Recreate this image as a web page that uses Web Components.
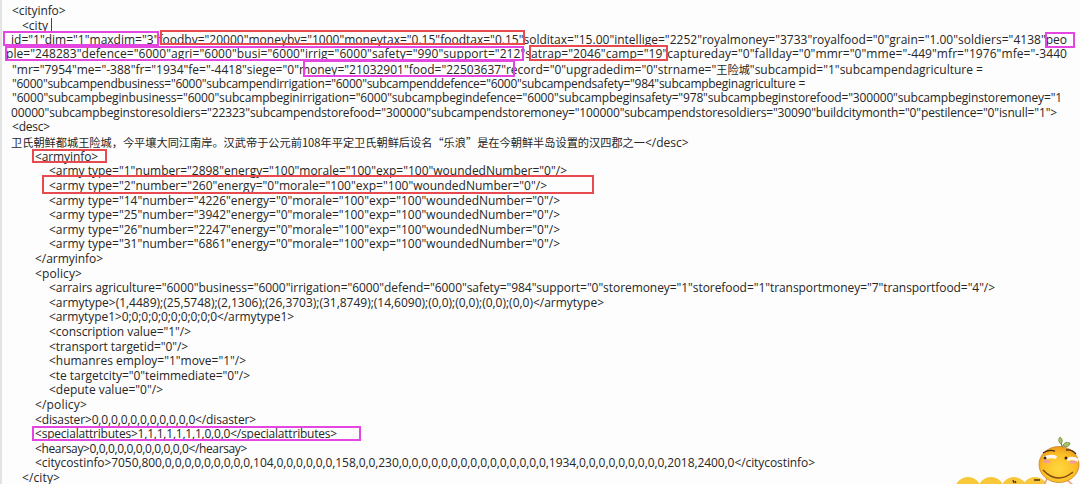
<!DOCTYPE html>
<html>
<head>
<meta charset="utf-8">
<style>
html, body { margin: 0; height: 100%; background: #fdfdfd; overflow: hidden; }
</style>
</head>
<body>
<xml-view>
<xml-line indent="12" end="65.5">&lt;cityinfo&gt;</xml-line>
<xml-line indent="22">&lt;city<text-cursor></text-cursor></xml-line>
<xml-line indent="11" end="1067">id="1"dim="1"maxdim="3"foodbv="20000"moneybv="1000"moneytax="0.15"foodtax="0.15"solditax="15.00"intellige="2252"royalmoney="3733"royalfood="0"grain="1.00"soldiers="4138"peo</xml-line>
<xml-line indent="6" end="1067">ple="248283"defence="6000"agri="6000"busi="6000"irrig="6000"safety="990"support="212"satrap="2046"camp="19"captureday="0"fallday="0"mmr="0"mme="-449"mfr="1976"mfe="-3440</xml-line>
<xml-line indent="12" end="983">"mr="7954"me="-388"fr="1934"fe="-4418"siege="0"money="21032901"food="22503637"record="0"upgradedim="0"strname="<cn-text>王险城</cn-text>"subcampid="1"subcampendagriculture =</xml-line>
<xml-line indent="12" end="805">"6000"subcampendbusiness="6000"subcampendirrigation="6000"subcampenddefence="6000"subcampendsafety="984"subcampbeginagriculture =</xml-line>
<xml-line indent="12" end="1062">"6000"subcampbeginbusiness="6000"subcampbeginirrigation="6000"subcampbegindefence="6000"subcampbeginsafety="978"subcampbeginstorefood="300000"subcampbeginstoremoney="1</xml-line>
<xml-line indent="11" end="1057">00000"subcampbeginstoresoldiers="22323"subcampendstorefood="300000"subcampendstoremoney="100000"subcampendstoresoldiers="30090"buildcitymonth="0"pestilence="0"isnull="1"&gt;</xml-line>
<xml-line indent="12" end="50">&lt;desc&gt;</xml-line>
<xml-line indent="11"><cn-text>卫氏朝鲜都城王险城，今平壤大同江南岸。汉武帝于公元前108年平定卫氏朝鲜后设名“乐浪”是在今朝鲜半岛设置的汉四郡之一</cn-text>&lt;/desc&gt;</xml-line>
<xml-line indent="35" end="98">&lt;armyinfo&gt;</xml-line>
<xml-line indent="49" end="567">&lt;army type="1"number="2898"energy="100"morale="100"exp="100"woundedNumber="0"/&gt;</xml-line>
<xml-line indent="49" end="547">&lt;army type="2"number="260"energy="0"morale="100"exp="100"woundedNumber="0"/&gt;</xml-line>
<xml-line indent="49" end="560">&lt;army type="14"number="4226"energy="0"morale="100"exp="100"woundedNumber="0"/&gt;</xml-line>
<xml-line indent="49" end="560">&lt;army type="25"number="3942"energy="0"morale="100"exp="100"woundedNumber="0"/&gt;</xml-line>
<xml-line indent="49" end="560">&lt;army type="26"number="2247"energy="0"morale="100"exp="100"woundedNumber="0"/&gt;</xml-line>
<xml-line indent="49" end="560">&lt;army type="31"number="6861"energy="0"morale="100"exp="100"woundedNumber="0"/&gt;</xml-line>
<xml-line indent="35" end="103">&lt;/armyinfo&gt;</xml-line>
<xml-line indent="35" end="82">&lt;policy&gt;</xml-line>
<xml-line indent="49" end="995">&lt;arrairs agriculture="6000"business="6000"irrigation="6000"defend="6000"safety="984"support="0"storemoney="1"storefood="1"transportmoney="7"transportfood="4"/&gt;</xml-line>
<xml-line indent="49" end="604">&lt;armytype&gt;(1,4489);(25,5748);(2,1306);(26,3703);(31,8749);(14,6090);(0,0);(0,0);(0,0);(0,0)&lt;/armytype&gt;</xml-line>
<xml-line indent="49" end="294">&lt;armytype1&gt;0;0;0;0;0;0;0;0;0;0&lt;/armytype1&gt;</xml-line>
<xml-line indent="49" end="191">&lt;conscription value="1"/&gt;</xml-line>
<xml-line indent="49" end="188">&lt;transport targetid="0"/&gt;</xml-line>
<xml-line indent="49" end="246">&lt;humanres employ="1"move="1"/&gt;</xml-line>
<xml-line indent="49" end="250">&lt;te targetcity="0"teimmediate="0"/&gt;</xml-line>
<xml-line indent="49" end="163">&lt;depute value="0"/&gt;</xml-line>
<xml-line indent="35" end="87">&lt;/policy&gt;</xml-line>
<xml-line indent="35" end="256">&lt;disaster&gt;0,0,0,0,0,0,0,0,0,0,0&lt;/disaster&gt;</xml-line>
<xml-line indent="35" end="337">&lt;specialattributes&gt;1,1,1,1,1,1,1,0,0,0&lt;/specialattributes&gt;</xml-line>
<xml-line indent="35" end="247">&lt;hearsay&gt;0,0,0,0,0,0,0,0,0,0,0&lt;/hearsay&gt;</xml-line>
<xml-line indent="35" end="815">&lt;citycostinfo&gt;7050,800,0,0,0,0,0,0,0,0,0,104,0,0,0,0,0,0,158,0,0,230,0,0,0,0,0,0,0,0,0,0,0,0,0,0,0,1934,0,0,0,0,0,0,0,0,0,2018,2400,0&lt;/citycostinfo&gt;</xml-line>
<xml-line indent="22" end="60">&lt;/city&gt;</xml-line>

<note-box x="3" y="31" w="156" h="15" color="#e545e0"></note-box>
<note-box x="160" y="30" w="365" h="15" color="#e84a50"></note-box>
<note-box x="1045" y="32" w="30" h="16" color="#e545e0"></note-box>
<note-box x="5" y="46" w="519" h="15" color="#e545e0"></note-box>
<note-box x="529" y="45" w="139" h="16" color="#e84a50"></note-box>
<note-box x="303" y="60" w="212" h="17" color="#e545e0"></note-box>
<note-box x="32" y="149" w="75" h="14" color="#e84a50"></note-box>
<note-box x="42" y="175" w="552" h="19" color="#e84a50"></note-box>
<note-box x="32" y="426" w="329" h="15" color="#e545e0"></note-box>

<orange-bug></orange-bug>
</xml-view>

<script>
(function() {

const viewTemplate = document.createElement('template');
viewTemplate.innerHTML = `
	<style>
		:host {
			display: block; position: relative; width: 1080px; height: 484px; overflow: hidden;
			box-sizing: border-box; padding-top: 3.6px;
			background: #fdfdfd; color: #262626;
			font: 12px/14.62px "Open Sans", "Noto Sans CJK SC", sans-serif;
		}
		:host::before {
			content: ""; position: absolute; left: 0; top: 0; bottom: 0; width: 2px; background: #e3e3e3;
		}
	</style>
	<slot></slot>
`;

class XmlView extends HTMLElement {
	constructor() {
		super();
		this.attachShadow({mode: 'open'}).appendChild(viewTemplate.content.cloneNode(true));
	}
}
customElements.define('xml-view', XmlView);

class CnText extends HTMLElement {
	constructor() {
		super();
		this.attachShadow({mode: 'open'}).innerHTML = `<style>
			:host { font-family: "Noto Sans CJK SC", sans-serif; font-size: 11.2px; }
		</style><slot></slot>`;
	}
}
customElements.define('cn-text', CnText);

class TextCursor extends HTMLElement {
	constructor() {
		super();
		this.attachShadow({mode: 'open'}).innerHTML = `<style>
			:host { display: inline-block; width: 1px; height: 14px; background: #444; margin-left: 3px; vertical-align: -2px; }
		</style>`;
	}
}
customElements.define('text-cursor', TextCursor);

// annotation rectangles drawn over the text
class NoteBox extends HTMLElement {
	constructor() {
		super();
		this.attachShadow({mode: 'open'}).innerHTML = `<style>
			:host { display: block; position: absolute; box-sizing: border-box; border: 2px solid; }
		</style>`;
	}
	connectedCallback() {
		let s = this.style;
		s.left = this.getAttribute('x') + 'px';
		s.top = this.getAttribute('y') + 'px';
		s.width = this.getAttribute('w') + 'px';
		s.height = this.getAttribute('h') + 'px';
		s.borderColor = this.getAttribute('color');
	}
}
customElements.define('note-box', NoteBox);

class OrangeBug extends HTMLElement {
	constructor() {
		super();
		this.attachShadow({mode: 'open'}).innerHTML = `<style>
			:host { display: block; position: absolute; right: 0; bottom: 0; width: 130px; height: 52px; }
			svg { display: block; }
		</style>
		<svg width="130" height="52" viewBox="950 432 130 52">
			<defs>
				<radialGradient id="g" cx="0.5" cy="0.62" r="0.6"><stop offset="0" stop-color="#ffd840"/><stop offset="0.7" stop-color="#fbbd25"/><stop offset="1" stop-color="#f09c1c"/></radialGradient>
			</defs>
			<circle cx="968" cy="490" r="13" fill="#f9c83a"/>
			<circle cx="991" cy="490" r="13" fill="#f9c83a"/>
			<circle cx="1014" cy="490" r="13" fill="#f9c83a"/>
			<circle cx="1035" cy="490" r="13" fill="#f9c83a"/>
			<path d="M1013 480l1 3M1015 481l1 2M1034 480h6" stroke="#4a3010" stroke-width="1.3"/>
			<path d="M1047 479l-3 6M1067 480l6 5" stroke="#e8a080" stroke-width="1.6"/>
			<ellipse cx="1059" cy="464.5" rx="20" ry="18" fill="url(#g)" stroke="#c9862a" stroke-width=".8"/>
			<path d="M1062 447q0-2-1-4" stroke="#6b7a30" stroke-width="1.2" fill="none"/>
			<path d="M1061 444q-4-3-1-7q4 3 1 7z" fill="#a9c46a" stroke="#6b8a30" stroke-width=".8"/>
			<path d="M1063 446q1-5 7-3q-1 5-7 3z" fill="#a9c46a" stroke="#6b8a30" stroke-width=".8"/>
			<path d="M1043 457q7-4 14-1l-1 3q-6-2-12 1z" fill="#fff8ea"/>
			<path d="M1067 458q6-3 12 1l-1 3q-5-3-11-1z" fill="#fff8ea"/>
			<path d="M1043 453q5-4 12-2M1066 450q6-1 10 4" stroke="#4a3010" stroke-width="1.3" fill="none"/>
			<circle cx="1045" cy="458" r="1.5" fill="#3a2510"/>
			<circle cx="1066" cy="458" r="1.5" fill="#3a2510"/>
			<ellipse cx="1047" cy="461.5" rx="3.5" ry="1.5" fill="#f59aa0"/>
			<ellipse cx="1073" cy="462" rx="3.5" ry="1.5" fill="#f59aa0"/>
			<path d="M1043 470q14 15 30 2" stroke="#7a4a10" stroke-width="1.3" fill="none"/>
		</svg>`;
	}
}
customElements.define('orange-bug', OrangeBug);

const lineTemplate = document.createElement('template');
lineTemplate.innerHTML = `
	<style>
		:host { display: block; height: 14.62px; line-height: 14.62px; white-space: nowrap; }
		div { padding-left: var(--indent, 0); }
	</style>
	<div><slot></slot></div>
`;

class XmlLine extends HTMLElement {
	constructor() {
		super();
		this.attachShadow({mode: 'open'}).appendChild(lineTemplate.content.cloneNode(true));
	}
	connectedCallback() {
		this.style.setProperty('--indent', (this.getAttribute('indent') || 0) + 'px');
		// the source font runs a little narrower or wider line by line, so stretch to the real end
		let end = this.getAttribute('end');
		if (end) {
			let range = document.createRange();
			range.selectNodeContents(this);
			let right = range.getBoundingClientRect().right;
			this.style.letterSpacing = ((end - right) / this.textContent.length) + 'px';
		}
	}
}
// defined last: the lines measure themselves and need the view's font in place
customElements.define('xml-line', XmlLine);

})();
</script>
</body>
</html>
